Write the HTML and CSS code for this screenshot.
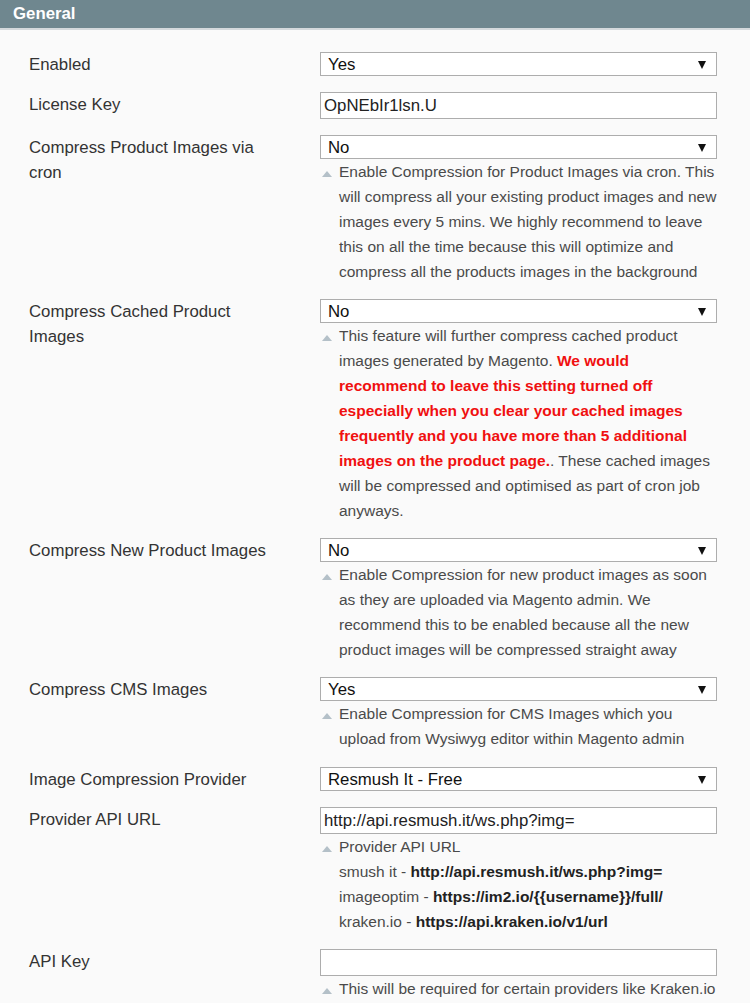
FILE: index.html
```html
<!DOCTYPE html>
<html lang="en">
<head>
<meta charset="utf-8">
<title>General</title>
<link rel="stylesheet" href="styles.css">
</head>
<body>
<div class="section">
  <div class="section-head">General</div>
  <div class="rows">
    <div class="row">
      <div class="label">Enabled</div>
      <div class="value">
        <div class="select">Yes</div>
      </div>
    </div>
    <div class="row">
      <div class="label">License Key</div>
      <div class="value">
        <div class="input">OpNEbIr1lsn.U</div>
      </div>
    </div>
    <div class="row">
      <div class="label">Compress Product Images via cron</div>
      <div class="value">
        <div class="select">No</div>
        <div class="note">Enable Compression for Product Images via cron. This will compress all your existing product images and new images every 5 mins. We highly recommend to leave this on all the time because this will optimize and compress all the products images in the background</div>
      </div>
    </div>
    <div class="row">
      <div class="label">Compress Cached Product Images</div>
      <div class="value">
        <div class="select">No</div>
        <div class="note">This feature will further compress cached product images generated by Magento. <b class="warn">We would recommend to leave this setting turned off especially when you clear your cached images frequently and you have more than 5 additional images on the product page.</b>. These cached images will be compressed and optimised as part of cron job anyways.</div>
      </div>
    </div>
    <div class="row">
      <div class="label">Compress New Product Images</div>
      <div class="value">
        <div class="select">No</div>
        <div class="note">Enable Compression for new product images as soon as they are uploaded via Magento admin. We recommend this to be enabled because all the new product images will be compressed straight away</div>
      </div>
    </div>
    <div class="row">
      <div class="label">Compress CMS Images</div>
      <div class="value">
        <div class="select">Yes</div>
        <div class="note">Enable Compression for CMS Images which you upload from Wysiwyg editor within Magento admin</div>
      </div>
    </div>
    <div class="row">
      <div class="label">Image Compression Provider</div>
      <div class="value">
        <div class="select">Resmush It - Free</div>
      </div>
    </div>
    <div class="row">
      <div class="label">Provider API URL</div>
      <div class="value">
        <div class="input">http://api.resmush.it/ws.php?img=</div>
        <div class="note">Provider API URL<br>smush it - <b>http://api.resmush.it/ws.php?img=</b><br>imageoptim - <b>https://im2.io/{{username}}/full/</b><br>kraken.io - <b>https://api.kraken.io/v1/url</b></div>
      </div>
    </div>
    <div class="row">
      <div class="label">API Key</div>
      <div class="value">
        <div class="input"></div>
        <div class="note">This will be required for certain providers like Kraken.io</div>
      </div>
    </div>
  </div>
</div>
</body>
</html>
```

FILE: styles.css
```css
html, body {
  margin: 0;
  padding: 0;
  background: #fafafa;
}
body {
  font-family: "Liberation Sans", Arial, sans-serif;
  font-size: 16.8px;
  color: #333;
}
.section-head {
  height: 28px;
  line-height: 27px;
  background: #6f878f;
  color: #fff;
  font-weight: bold;
  padding-left: 13px;
  border-bottom: 2px solid #d4d9dc;
}
.rows {
  display: flex;
  flex-direction: column;
  gap: 15.3px;
  padding: 22px 33px 0 29px;
}
.row {
  display: flex;
}
.label {
  width: 250px;
  margin-right: 41px;
  line-height: 25px;
  color: #333;
}
.value {
  flex: 1;
}
.select {
  box-sizing: border-box;
  height: 24px;
  line-height: 24px;
  border: 1px solid #adadad;
  background: #fff;
  color: #111;
  padding-left: 7px;
  position: relative;
}
.select::after {
  content: "";
  position: absolute;
  right: 10px;
  top: 8px;
  border-left: 4.5px solid transparent;
  border-right: 4.5px solid transparent;
  border-top: 8px solid #111;
}
.input {
  box-sizing: border-box;
  height: 27px;
  line-height: 25px;
  border: 1px solid #adadad;
  background: #fff;
  color: #222;
  padding-left: 3px;
}
.note {
  position: relative;
  padding-left: 19px;
  font-size: 15.5px;
  line-height: 25px;
  color: #4a4a4a;
}
.note::before {
  content: "";
  position: absolute;
  left: 2px;
  top: 12px;
  border-left: 5px solid transparent;
  border-right: 5px solid transparent;
  border-bottom: 6px solid #b4c0c8;
}
.note b {
  color: #222;
}
.note b.warn {
  color: #f01010;
}
```
